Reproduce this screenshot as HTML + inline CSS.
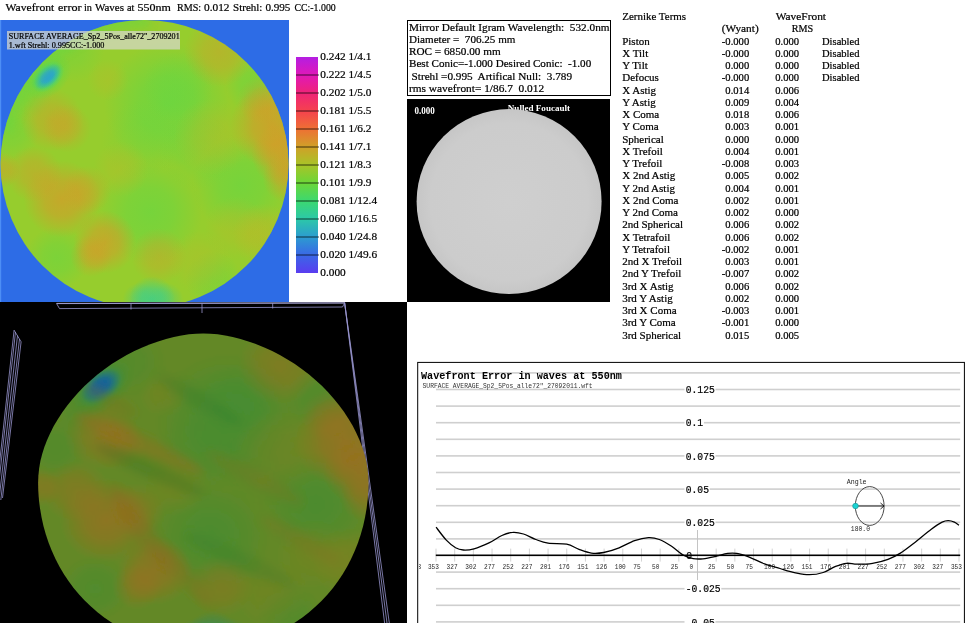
<!DOCTYPE html>
<html><head><meta charset="utf-8"><title>Wavefront report</title>
<style>html,body{margin:0;padding:0;background:#fff}svg{display:block}text{opacity:.999}</style></head><body>
<svg width="972" height="623" viewBox="0 0 972 623">
<defs>
<radialGradient id="g2ca4cc"><stop offset="0" stop-color="#2ca4cc" stop-opacity="1"/><stop offset="0.45" stop-color="#2ca4cc" stop-opacity="0.75"/><stop offset="1" stop-color="#2ca4cc" stop-opacity="0"/></radialGradient>
<radialGradient id="g2fcf9a"><stop offset="0" stop-color="#2fcf9a" stop-opacity="1"/><stop offset="0.45" stop-color="#2fcf9a" stop-opacity="0.75"/><stop offset="1" stop-color="#2fcf9a" stop-opacity="0"/></radialGradient>
<radialGradient id="g62d844"><stop offset="0" stop-color="#62d844" stop-opacity="1"/><stop offset="0.45" stop-color="#62d844" stop-opacity="0.75"/><stop offset="1" stop-color="#62d844" stop-opacity="0"/></radialGradient>
<radialGradient id="gbcb828"><stop offset="0" stop-color="#bcb828" stop-opacity="1"/><stop offset="0.45" stop-color="#bcb828" stop-opacity="0.75"/><stop offset="1" stop-color="#bcb828" stop-opacity="0"/></radialGradient>
<radialGradient id="gde9428"><stop offset="0" stop-color="#de9428" stop-opacity="1"/><stop offset="0.45" stop-color="#de9428" stop-opacity="0.75"/><stop offset="1" stop-color="#de9428" stop-opacity="0"/></radialGradient>
<clipPath id="c2d"><circle cx="144.5" cy="164" r="144"/></clipPath>
<clipPath id="cpanel"><rect x="0" y="20" width="289" height="282"/></clipPath>
<clipPath id="c3dpanel"><rect x="0" y="302" width="407" height="321"/></clipPath>
<clipPath id="cchart"><rect x="419" y="363" width="545" height="260"/></clipPath>
<linearGradient id="cbar" x1="0" y1="0" x2="0" y2="1">
<stop offset="0.0000" stop-color="#b41ee2"/>
<stop offset="0.0833" stop-color="#e018b8"/>
<stop offset="0.1667" stop-color="#ef2478"/>
<stop offset="0.2500" stop-color="#f5424e"/>
<stop offset="0.3333" stop-color="#ee7034"/>
<stop offset="0.4167" stop-color="#d0a028"/>
<stop offset="0.5000" stop-color="#a8c428"/>
<stop offset="0.5833" stop-color="#6cd638"/>
<stop offset="0.6667" stop-color="#3cd870"/>
<stop offset="0.7500" stop-color="#2cc8a8"/>
<stop offset="0.8333" stop-color="#2c9cd0"/>
<stop offset="0.9167" stop-color="#3a68e6"/>
<stop offset="1.0000" stop-color="#5a3cf0"/>
</linearGradient>
<filter id="bl3" x="-10%" y="-10%" width="120%" height="120%"><feGaussianBlur stdDeviation="1.2"/></filter>
<filter id="bl4" x="-30%" y="-80%" width="160%" height="260%"><feGaussianBlur stdDeviation="4"/></filter>
<radialGradient id="fdisc"><stop offset="0" stop-color="#cfcfcf"/><stop offset="0.85" stop-color="#cccccc"/><stop offset="1" stop-color="#c6c6c6"/></radialGradient>
<filter id="bl05"><feGaussianBlur stdDeviation="0.5"/></filter>
</defs>
<rect width="972" height="623" fill="#fff"/>
<g id="title">
<text x="5.6" y="10.6" font-size="11.3" font-family='"Liberation Serif", serif' font-weight="normal" fill="#000" text-anchor="start" xml:space="preserve" stroke="#000" stroke-width="0.22" textLength="48.7" lengthAdjust="spacingAndGlyphs" >Wavefront</text>
<text x="58" y="10.6" font-size="11.3" font-family='"Liberation Serif", serif' font-weight="normal" fill="#000" text-anchor="start" xml:space="preserve" stroke="#000" stroke-width="0.22" textLength="23.5" lengthAdjust="spacingAndGlyphs" >error</text>
<text x="84" y="10.6" font-size="11.3" font-family='"Liberation Serif", serif' font-weight="normal" fill="#000" text-anchor="start" xml:space="preserve" stroke="#000" stroke-width="0.22" textLength="8" lengthAdjust="spacingAndGlyphs" >in</text>
<text x="94.9" y="10.6" font-size="11.3" font-family='"Liberation Serif", serif' font-weight="normal" fill="#000" text-anchor="start" xml:space="preserve" stroke="#000" stroke-width="0.22" textLength="29.1" lengthAdjust="spacingAndGlyphs" >Waves</text>
<text x="127" y="10.6" font-size="11.3" font-family='"Liberation Serif", serif' font-weight="normal" fill="#000" text-anchor="start" xml:space="preserve" stroke="#000" stroke-width="0.22" textLength="7.4" lengthAdjust="spacingAndGlyphs" >at</text>
<text x="137.5" y="10.6" font-size="11.3" font-family='"Liberation Serif", serif' font-weight="normal" fill="#000" text-anchor="start" xml:space="preserve" stroke="#000" stroke-width="0.22" textLength="33.4" lengthAdjust="spacingAndGlyphs" >550nm</text>
<text x="177" y="10.6" font-size="11.3" font-family='"Liberation Serif", serif' font-weight="normal" fill="#000" text-anchor="start" xml:space="preserve" stroke="#000" stroke-width="0.22" textLength="24.1" lengthAdjust="spacingAndGlyphs" >RMS:</text>
<text x="204" y="10.6" font-size="11.3" font-family='"Liberation Serif", serif' font-weight="normal" fill="#000" text-anchor="start" xml:space="preserve" stroke="#000" stroke-width="0.22" textLength="25.5" lengthAdjust="spacingAndGlyphs" >0.012</text>
<text x="233.1" y="10.6" font-size="11.3" font-family='"Liberation Serif", serif' font-weight="normal" fill="#000" text-anchor="start" xml:space="preserve" stroke="#000" stroke-width="0.22" textLength="29.3" lengthAdjust="spacingAndGlyphs" >Strehl:</text>
<text x="265.4" y="10.6" font-size="11.3" font-family='"Liberation Serif", serif' font-weight="normal" fill="#000" text-anchor="start" xml:space="preserve" stroke="#000" stroke-width="0.22" textLength="25.0" lengthAdjust="spacingAndGlyphs" >0.995</text>
<text x="294.5" y="10.6" font-size="11.3" font-family='"Liberation Serif", serif' font-weight="normal" fill="#000" text-anchor="start" xml:space="preserve" stroke="#000" stroke-width="0.22" textLength="41.2" lengthAdjust="spacingAndGlyphs" >CC:-1.000</text>
</g>
<rect x="0" y="20" width="289" height="282" fill="#2d6ce6"/>
<rect x="0" y="20" width="1.2" height="282" fill="#4d8ef5"/>
<g clip-path="url(#cpanel)"><g clip-path="url(#c2d)">
<g id="hm">
<circle cx="144.5" cy="164" r="146" fill="#96cd2d"/>
<circle cx="167" cy="105" r="63.0" fill="url(#g62d844)" opacity="0.68"/>
<circle cx="178" cy="87" r="35.0" fill="url(#g62d844)" opacity="0.36"/>
<circle cx="150" cy="212" r="52.5" fill="url(#g62d844)" opacity="0.61"/>
<circle cx="241" cy="185" r="49.0" fill="url(#g62d844)" opacity="0.61"/>
<circle cx="253" cy="85" r="28.0" fill="url(#g62d844)" opacity="0.50"/>
<circle cx="57" cy="258" r="31.5" fill="url(#g62d844)" opacity="0.50"/>
<circle cx="11" cy="132" r="28.0" fill="url(#g62d844)" opacity="0.43"/>
<circle cx="213" cy="279" r="28.0" fill="url(#g62d844)" opacity="0.43"/>
<circle cx="152" cy="299" r="22.8" fill="url(#g2fcf9a)" opacity="0.65"/>
<circle cx="140" cy="300" r="17.5" fill="url(#g2fcf9a)" opacity="0.36"/>
<circle cx="166" cy="300" r="17.5" fill="url(#g2fcf9a)" opacity="0.36"/>
<circle cx="70" cy="48" r="35.0" fill="url(#g62d844)" opacity="0.36"/>
<circle cx="28" cy="95" r="24.5" fill="url(#g62d844)" opacity="0.36"/>
<circle cx="197" cy="151" r="38.5" fill="url(#g62d844)" opacity="0.29"/>
<circle cx="140" cy="140" r="38.5" fill="url(#g62d844)" opacity="0.25"/>
<circle cx="272" cy="126" r="42.0" fill="url(#gde9428)" opacity="0.72"/>
<circle cx="283" cy="155" r="31.5" fill="url(#gde9428)" opacity="0.61"/>
<circle cx="287" cy="178" r="24.5" fill="url(#gde9428)" opacity="0.50"/>
<circle cx="262" cy="100" r="24.5" fill="url(#gde9428)" opacity="0.36"/>
<circle cx="219" cy="52" r="35.0" fill="url(#gde9428)" opacity="0.40"/>
<circle cx="62" cy="199" r="38.5" fill="url(#gde9428)" opacity="0.65"/>
<circle cx="34" cy="174" r="28.0" fill="url(#gde9428)" opacity="0.43"/>
<circle cx="87" cy="190" r="24.5" fill="url(#gde9428)" opacity="0.36"/>
<circle cx="105" cy="242" r="31.5" fill="url(#gde9428)" opacity="0.61"/>
<circle cx="91" cy="256" r="21.0" fill="url(#gde9428)" opacity="0.43"/>
<circle cx="52" cy="120" r="31.5" fill="url(#gde9428)" opacity="0.43"/>
<circle cx="67" cy="128" r="24.5" fill="url(#gde9428)" opacity="0.36"/>
<circle cx="159" cy="256" r="28.0" fill="url(#gde9428)" opacity="0.36"/>
<circle cx="264" cy="235" r="31.5" fill="url(#gbcb828)" opacity="0.58"/>
<circle cx="236" cy="228" r="31.5" fill="url(#gbcb828)" opacity="0.36"/>
<circle cx="212" cy="137" r="38.5" fill="url(#gbcb828)" opacity="0.40"/>
<circle cx="121" cy="169" r="28.0" fill="url(#gbcb828)" opacity="0.36"/>
<circle cx="108" cy="80" r="21.0" fill="url(#gbcb828)" opacity="0.36"/>
<circle cx="3" cy="170" r="17.5" fill="url(#gde9428)" opacity="0.43"/>
<circle cx="200" cy="262" r="31.5" fill="url(#gbcb828)" opacity="0.36"/>
<ellipse cx="47.5" cy="76.5" rx="27.200000000000003" ry="19.200000000000003" transform="rotate(-42 47.5 76.5)" fill="url(#g62d844)" opacity="0.9"/>
<ellipse cx="47.5" cy="76.5" rx="19.200000000000003" ry="12.8" transform="rotate(-42 47.5 76.5)" fill="url(#g2fcf9a)" opacity="0.9"/>
<ellipse cx="47.5" cy="76.5" rx="16.0" ry="9.600000000000001" transform="rotate(-42 47.5 76.5)" fill="url(#g2ca4cc)" opacity="1.0"/>
<ellipse cx="47.5" cy="76.5" rx="9.600000000000001" ry="5.760000000000001" transform="rotate(-42 47.5 76.5)" fill="url(#g2ca4cc)" opacity="1.0"/>
<path d="M6 130 A144 144 0 0 1 150 21" fill="none" stroke="#62d844" stroke-width="14" opacity="0.45" filter="url(#bl4)"/>
</g>
</g></g>
<rect x="7" y="31" width="173" height="18.5" fill="#d8d8cc" fill-opacity="0.72"/>
<text x="8.7" y="39.1" font-size="8.2" font-family='"Liberation Serif", serif' font-weight="normal" fill="#000" text-anchor="start" xml:space="preserve" stroke="#000" stroke-width="0.22" textLength="171" lengthAdjust="spacingAndGlyphs" >SURFACE AVERAGE_Sp2_5Pos_alle72&quot;_2709201</text>
<text x="8.7" y="48" font-size="8.2" font-family='"Liberation Serif", serif' font-weight="normal" fill="#000" text-anchor="start" xml:space="preserve" stroke="#000" stroke-width="0.22" >1.wft Strehl: 0.995CC:-1.000</text>
<rect x="296" y="57" width="22" height="216" fill="url(#cbar)"/>
<text x="320.3" y="60.1" font-size="11.3" font-family='"Liberation Serif", serif' font-weight="normal" fill="#000" text-anchor="start" xml:space="preserve" stroke="#000" stroke-width="0.22" >0.242 1/4.1</text>
<rect x="296" y="74.5" width="23" height="1" fill="#000" fill-opacity="0.7"/>
<text x="320.3" y="78.1" font-size="11.3" font-family='"Liberation Serif", serif' font-weight="normal" fill="#000" text-anchor="start" xml:space="preserve" stroke="#000" stroke-width="0.22" >0.222 1/4.5</text>
<rect x="296" y="92.5" width="23" height="1" fill="#000" fill-opacity="0.7"/>
<text x="320.3" y="96.1" font-size="11.3" font-family='"Liberation Serif", serif' font-weight="normal" fill="#000" text-anchor="start" xml:space="preserve" stroke="#000" stroke-width="0.22" >0.202 1/5.0</text>
<rect x="296" y="110.5" width="23" height="1" fill="#000" fill-opacity="0.7"/>
<text x="320.3" y="114.1" font-size="11.3" font-family='"Liberation Serif", serif' font-weight="normal" fill="#000" text-anchor="start" xml:space="preserve" stroke="#000" stroke-width="0.22" >0.181 1/5.5</text>
<rect x="296" y="128.5" width="23" height="1" fill="#000" fill-opacity="0.7"/>
<text x="320.3" y="132.1" font-size="11.3" font-family='"Liberation Serif", serif' font-weight="normal" fill="#000" text-anchor="start" xml:space="preserve" stroke="#000" stroke-width="0.22" >0.161 1/6.2</text>
<rect x="296" y="146.5" width="23" height="1" fill="#000" fill-opacity="0.7"/>
<text x="320.3" y="150.1" font-size="11.3" font-family='"Liberation Serif", serif' font-weight="normal" fill="#000" text-anchor="start" xml:space="preserve" stroke="#000" stroke-width="0.22" >0.141 1/7.1</text>
<rect x="296" y="164.5" width="23" height="1" fill="#000" fill-opacity="0.7"/>
<text x="320.3" y="168.1" font-size="11.3" font-family='"Liberation Serif", serif' font-weight="normal" fill="#000" text-anchor="start" xml:space="preserve" stroke="#000" stroke-width="0.22" >0.121 1/8.3</text>
<rect x="296" y="182.5" width="23" height="1" fill="#000" fill-opacity="0.7"/>
<text x="320.3" y="186.1" font-size="11.3" font-family='"Liberation Serif", serif' font-weight="normal" fill="#000" text-anchor="start" xml:space="preserve" stroke="#000" stroke-width="0.22" >0.101 1/9.9</text>
<rect x="296" y="200.5" width="23" height="1" fill="#000" fill-opacity="0.7"/>
<text x="320.3" y="204.1" font-size="11.3" font-family='"Liberation Serif", serif' font-weight="normal" fill="#000" text-anchor="start" xml:space="preserve" stroke="#000" stroke-width="0.22" >0.081 1/12.4</text>
<rect x="296" y="218.5" width="23" height="1" fill="#000" fill-opacity="0.7"/>
<text x="320.3" y="222.1" font-size="11.3" font-family='"Liberation Serif", serif' font-weight="normal" fill="#000" text-anchor="start" xml:space="preserve" stroke="#000" stroke-width="0.22" >0.060 1/16.5</text>
<rect x="296" y="236.5" width="23" height="1" fill="#000" fill-opacity="0.7"/>
<text x="320.3" y="240.1" font-size="11.3" font-family='"Liberation Serif", serif' font-weight="normal" fill="#000" text-anchor="start" xml:space="preserve" stroke="#000" stroke-width="0.22" >0.040 1/24.8</text>
<rect x="296" y="254.5" width="23" height="1" fill="#000" fill-opacity="0.7"/>
<text x="320.3" y="258.1" font-size="11.3" font-family='"Liberation Serif", serif' font-weight="normal" fill="#000" text-anchor="start" xml:space="preserve" stroke="#000" stroke-width="0.22" >0.020 1/49.6</text>
<text x="320.3" y="276.1" font-size="11.3" font-family='"Liberation Serif", serif' font-weight="normal" fill="#000" text-anchor="start" xml:space="preserve" stroke="#000" stroke-width="0.22" >0.000</text>
<rect x="407.5" y="20.5" width="203" height="75" fill="#fff" stroke="#000" stroke-width="1"/>
<text x="409" y="30.8" font-size="11.2" font-family='"Liberation Serif", serif' font-weight="normal" fill="#000" text-anchor="start" xml:space="preserve" stroke="#000" stroke-width="0.22" textLength="200.5" lengthAdjust="spacingAndGlyphs" >Mirror Default Igram Wavelength:  532.0nm</text>
<text x="409" y="43.0" font-size="11.2" font-family='"Liberation Serif", serif' font-weight="normal" fill="#000" text-anchor="start" xml:space="preserve" stroke="#000" stroke-width="0.22" textLength="106.4" lengthAdjust="spacingAndGlyphs" >Diameter =  706.25 mm</text>
<text x="409" y="55.2" font-size="11.2" font-family='"Liberation Serif", serif' font-weight="normal" fill="#000" text-anchor="start" xml:space="preserve" stroke="#000" stroke-width="0.22" textLength="91.7" lengthAdjust="spacingAndGlyphs" >ROC = 6850.00 mm</text>
<text x="409" y="67.39999999999999" font-size="11.2" font-family='"Liberation Serif", serif' font-weight="normal" fill="#000" text-anchor="start" xml:space="preserve" stroke="#000" stroke-width="0.22" textLength="182.2" lengthAdjust="spacingAndGlyphs" >Best Conic=-1.000 Desired Conic:  -1.00</text>
<text x="411.6" y="79.6" font-size="11.2" font-family='"Liberation Serif", serif' font-weight="normal" fill="#000" text-anchor="start" xml:space="preserve" stroke="#000" stroke-width="0.22" textLength="160.4" lengthAdjust="spacingAndGlyphs" >Strehl =0.995  Artifical Null:  3.789</text>
<text x="409" y="91.8" font-size="11.2" font-family='"Liberation Serif", serif' font-weight="normal" fill="#000" text-anchor="start" xml:space="preserve" stroke="#000" stroke-width="0.22" textLength="135.1" lengthAdjust="spacingAndGlyphs" >rms wavefront= 1/86.7  0.012</text>
<rect x="407" y="99" width="203" height="203" fill="#000"/>
<text x="414.4" y="113.6" font-size="9.3" font-family='"Liberation Serif", serif' font-weight="bold" fill="#fff" text-anchor="start" xml:space="preserve" textLength="20.3" lengthAdjust="spacingAndGlyphs" >0.000</text>
<text x="507.8" y="110.9" font-size="9" font-family='"Liberation Serif", serif' font-weight="bold" fill="#fff" text-anchor="start" xml:space="preserve" textLength="62.3" lengthAdjust="spacingAndGlyphs" >Nulled Foucault</text>
<circle cx="509.1" cy="201.6" r="92.5" fill="url(#fdisc)" filter="url(#bl05)"/>
<text x="622.2" y="19.7" font-size="11" font-family='"Liberation Serif", serif' font-weight="normal" fill="#000" text-anchor="start" xml:space="preserve" stroke="#000" stroke-width="0.22" textLength="63.9" lengthAdjust="spacingAndGlyphs" >Zernike Terms</text>
<text x="775.7" y="19.7" font-size="11" font-family='"Liberation Serif", serif' font-weight="normal" fill="#000" text-anchor="start" xml:space="preserve" stroke="#000" stroke-width="0.22" textLength="50.3" lengthAdjust="spacingAndGlyphs" >WaveFront</text>
<text x="721.7" y="32.2" font-size="11" font-family='"Liberation Serif", serif' font-weight="normal" fill="#000" text-anchor="start" xml:space="preserve" stroke="#000" stroke-width="0.22" textLength="37" lengthAdjust="spacingAndGlyphs" >(Wyant)</text>
<text x="791.8" y="32.2" font-size="11" font-family='"Liberation Serif", serif' font-weight="normal" fill="#000" text-anchor="start" xml:space="preserve" stroke="#000" stroke-width="0.22" textLength="21.4" lengthAdjust="spacingAndGlyphs" >RMS</text>
<text x="622.2" y="44.60" font-size="11" font-family='"Liberation Serif", serif' font-weight="normal" fill="#000" text-anchor="start" xml:space="preserve" stroke="#000" stroke-width="0.22" >Piston</text>
<text x="749.2" y="44.60" font-size="10.6" font-family='"Liberation Serif", serif' font-weight="normal" fill="#000" text-anchor="end" xml:space="preserve" stroke="#000" stroke-width="0.22" >-0.000</text>
<text x="775.2" y="44.60" font-size="10.6" font-family='"Liberation Serif", serif' font-weight="normal" fill="#000" text-anchor="start" xml:space="preserve" stroke="#000" stroke-width="0.22" >0.000</text>
<text x="822" y="44.60" font-size="10.6" font-family='"Liberation Serif", serif' font-weight="normal" fill="#000" text-anchor="start" xml:space="preserve" stroke="#000" stroke-width="0.22" textLength="37.5" lengthAdjust="spacingAndGlyphs" >Disabled</text>
<text x="622.2" y="56.85" font-size="11" font-family='"Liberation Serif", serif' font-weight="normal" fill="#000" text-anchor="start" xml:space="preserve" stroke="#000" stroke-width="0.22" >X Tilt</text>
<text x="749.2" y="56.85" font-size="10.6" font-family='"Liberation Serif", serif' font-weight="normal" fill="#000" text-anchor="end" xml:space="preserve" stroke="#000" stroke-width="0.22" >-0.000</text>
<text x="775.2" y="56.85" font-size="10.6" font-family='"Liberation Serif", serif' font-weight="normal" fill="#000" text-anchor="start" xml:space="preserve" stroke="#000" stroke-width="0.22" >0.000</text>
<text x="822" y="56.85" font-size="10.6" font-family='"Liberation Serif", serif' font-weight="normal" fill="#000" text-anchor="start" xml:space="preserve" stroke="#000" stroke-width="0.22" textLength="37.5" lengthAdjust="spacingAndGlyphs" >Disabled</text>
<text x="622.2" y="69.10" font-size="11" font-family='"Liberation Serif", serif' font-weight="normal" fill="#000" text-anchor="start" xml:space="preserve" stroke="#000" stroke-width="0.22" >Y Tilt</text>
<text x="749.2" y="69.10" font-size="10.6" font-family='"Liberation Serif", serif' font-weight="normal" fill="#000" text-anchor="end" xml:space="preserve" stroke="#000" stroke-width="0.22" >0.000</text>
<text x="775.2" y="69.10" font-size="10.6" font-family='"Liberation Serif", serif' font-weight="normal" fill="#000" text-anchor="start" xml:space="preserve" stroke="#000" stroke-width="0.22" >0.000</text>
<text x="822" y="69.10" font-size="10.6" font-family='"Liberation Serif", serif' font-weight="normal" fill="#000" text-anchor="start" xml:space="preserve" stroke="#000" stroke-width="0.22" textLength="37.5" lengthAdjust="spacingAndGlyphs" >Disabled</text>
<text x="622.2" y="81.35" font-size="11" font-family='"Liberation Serif", serif' font-weight="normal" fill="#000" text-anchor="start" xml:space="preserve" stroke="#000" stroke-width="0.22" >Defocus</text>
<text x="749.2" y="81.35" font-size="10.6" font-family='"Liberation Serif", serif' font-weight="normal" fill="#000" text-anchor="end" xml:space="preserve" stroke="#000" stroke-width="0.22" >-0.000</text>
<text x="775.2" y="81.35" font-size="10.6" font-family='"Liberation Serif", serif' font-weight="normal" fill="#000" text-anchor="start" xml:space="preserve" stroke="#000" stroke-width="0.22" >0.000</text>
<text x="822" y="81.35" font-size="10.6" font-family='"Liberation Serif", serif' font-weight="normal" fill="#000" text-anchor="start" xml:space="preserve" stroke="#000" stroke-width="0.22" textLength="37.5" lengthAdjust="spacingAndGlyphs" >Disabled</text>
<text x="622.2" y="93.60" font-size="11" font-family='"Liberation Serif", serif' font-weight="normal" fill="#000" text-anchor="start" xml:space="preserve" stroke="#000" stroke-width="0.22" >X Astig</text>
<text x="749.2" y="93.60" font-size="10.6" font-family='"Liberation Serif", serif' font-weight="normal" fill="#000" text-anchor="end" xml:space="preserve" stroke="#000" stroke-width="0.22" >0.014</text>
<text x="775.2" y="93.60" font-size="10.6" font-family='"Liberation Serif", serif' font-weight="normal" fill="#000" text-anchor="start" xml:space="preserve" stroke="#000" stroke-width="0.22" >0.006</text>
<text x="622.2" y="105.85" font-size="11" font-family='"Liberation Serif", serif' font-weight="normal" fill="#000" text-anchor="start" xml:space="preserve" stroke="#000" stroke-width="0.22" >Y Astig</text>
<text x="749.2" y="105.85" font-size="10.6" font-family='"Liberation Serif", serif' font-weight="normal" fill="#000" text-anchor="end" xml:space="preserve" stroke="#000" stroke-width="0.22" >0.009</text>
<text x="775.2" y="105.85" font-size="10.6" font-family='"Liberation Serif", serif' font-weight="normal" fill="#000" text-anchor="start" xml:space="preserve" stroke="#000" stroke-width="0.22" >0.004</text>
<text x="622.2" y="118.10" font-size="11" font-family='"Liberation Serif", serif' font-weight="normal" fill="#000" text-anchor="start" xml:space="preserve" stroke="#000" stroke-width="0.22" >X Coma</text>
<text x="749.2" y="118.10" font-size="10.6" font-family='"Liberation Serif", serif' font-weight="normal" fill="#000" text-anchor="end" xml:space="preserve" stroke="#000" stroke-width="0.22" >0.018</text>
<text x="775.2" y="118.10" font-size="10.6" font-family='"Liberation Serif", serif' font-weight="normal" fill="#000" text-anchor="start" xml:space="preserve" stroke="#000" stroke-width="0.22" >0.006</text>
<text x="622.2" y="130.35" font-size="11" font-family='"Liberation Serif", serif' font-weight="normal" fill="#000" text-anchor="start" xml:space="preserve" stroke="#000" stroke-width="0.22" >Y Coma</text>
<text x="749.2" y="130.35" font-size="10.6" font-family='"Liberation Serif", serif' font-weight="normal" fill="#000" text-anchor="end" xml:space="preserve" stroke="#000" stroke-width="0.22" >0.003</text>
<text x="775.2" y="130.35" font-size="10.6" font-family='"Liberation Serif", serif' font-weight="normal" fill="#000" text-anchor="start" xml:space="preserve" stroke="#000" stroke-width="0.22" >0.001</text>
<text x="622.2" y="142.60" font-size="11" font-family='"Liberation Serif", serif' font-weight="normal" fill="#000" text-anchor="start" xml:space="preserve" stroke="#000" stroke-width="0.22" >Spherical</text>
<text x="749.2" y="142.60" font-size="10.6" font-family='"Liberation Serif", serif' font-weight="normal" fill="#000" text-anchor="end" xml:space="preserve" stroke="#000" stroke-width="0.22" >0.000</text>
<text x="775.2" y="142.60" font-size="10.6" font-family='"Liberation Serif", serif' font-weight="normal" fill="#000" text-anchor="start" xml:space="preserve" stroke="#000" stroke-width="0.22" >0.000</text>
<text x="622.2" y="154.85" font-size="11" font-family='"Liberation Serif", serif' font-weight="normal" fill="#000" text-anchor="start" xml:space="preserve" stroke="#000" stroke-width="0.22" >X Trefoil</text>
<text x="749.2" y="154.85" font-size="10.6" font-family='"Liberation Serif", serif' font-weight="normal" fill="#000" text-anchor="end" xml:space="preserve" stroke="#000" stroke-width="0.22" >0.004</text>
<text x="775.2" y="154.85" font-size="10.6" font-family='"Liberation Serif", serif' font-weight="normal" fill="#000" text-anchor="start" xml:space="preserve" stroke="#000" stroke-width="0.22" >0.001</text>
<text x="622.2" y="167.10" font-size="11" font-family='"Liberation Serif", serif' font-weight="normal" fill="#000" text-anchor="start" xml:space="preserve" stroke="#000" stroke-width="0.22" >Y Trefoil</text>
<text x="749.2" y="167.10" font-size="10.6" font-family='"Liberation Serif", serif' font-weight="normal" fill="#000" text-anchor="end" xml:space="preserve" stroke="#000" stroke-width="0.22" >-0.008</text>
<text x="775.2" y="167.10" font-size="10.6" font-family='"Liberation Serif", serif' font-weight="normal" fill="#000" text-anchor="start" xml:space="preserve" stroke="#000" stroke-width="0.22" >0.003</text>
<text x="622.2" y="179.35" font-size="11" font-family='"Liberation Serif", serif' font-weight="normal" fill="#000" text-anchor="start" xml:space="preserve" stroke="#000" stroke-width="0.22" >X 2nd Astig</text>
<text x="749.2" y="179.35" font-size="10.6" font-family='"Liberation Serif", serif' font-weight="normal" fill="#000" text-anchor="end" xml:space="preserve" stroke="#000" stroke-width="0.22" >0.005</text>
<text x="775.2" y="179.35" font-size="10.6" font-family='"Liberation Serif", serif' font-weight="normal" fill="#000" text-anchor="start" xml:space="preserve" stroke="#000" stroke-width="0.22" >0.002</text>
<text x="622.2" y="191.60" font-size="11" font-family='"Liberation Serif", serif' font-weight="normal" fill="#000" text-anchor="start" xml:space="preserve" stroke="#000" stroke-width="0.22" >Y 2nd Astig</text>
<text x="749.2" y="191.60" font-size="10.6" font-family='"Liberation Serif", serif' font-weight="normal" fill="#000" text-anchor="end" xml:space="preserve" stroke="#000" stroke-width="0.22" >0.004</text>
<text x="775.2" y="191.60" font-size="10.6" font-family='"Liberation Serif", serif' font-weight="normal" fill="#000" text-anchor="start" xml:space="preserve" stroke="#000" stroke-width="0.22" >0.001</text>
<text x="622.2" y="203.85" font-size="11" font-family='"Liberation Serif", serif' font-weight="normal" fill="#000" text-anchor="start" xml:space="preserve" stroke="#000" stroke-width="0.22" >X 2nd Coma</text>
<text x="749.2" y="203.85" font-size="10.6" font-family='"Liberation Serif", serif' font-weight="normal" fill="#000" text-anchor="end" xml:space="preserve" stroke="#000" stroke-width="0.22" >0.002</text>
<text x="775.2" y="203.85" font-size="10.6" font-family='"Liberation Serif", serif' font-weight="normal" fill="#000" text-anchor="start" xml:space="preserve" stroke="#000" stroke-width="0.22" >0.001</text>
<text x="622.2" y="216.10" font-size="11" font-family='"Liberation Serif", serif' font-weight="normal" fill="#000" text-anchor="start" xml:space="preserve" stroke="#000" stroke-width="0.22" >Y 2nd Coma</text>
<text x="749.2" y="216.10" font-size="10.6" font-family='"Liberation Serif", serif' font-weight="normal" fill="#000" text-anchor="end" xml:space="preserve" stroke="#000" stroke-width="0.22" >0.002</text>
<text x="775.2" y="216.10" font-size="10.6" font-family='"Liberation Serif", serif' font-weight="normal" fill="#000" text-anchor="start" xml:space="preserve" stroke="#000" stroke-width="0.22" >0.000</text>
<text x="622.2" y="228.35" font-size="11" font-family='"Liberation Serif", serif' font-weight="normal" fill="#000" text-anchor="start" xml:space="preserve" stroke="#000" stroke-width="0.22" >2nd Spherical</text>
<text x="749.2" y="228.35" font-size="10.6" font-family='"Liberation Serif", serif' font-weight="normal" fill="#000" text-anchor="end" xml:space="preserve" stroke="#000" stroke-width="0.22" >0.006</text>
<text x="775.2" y="228.35" font-size="10.6" font-family='"Liberation Serif", serif' font-weight="normal" fill="#000" text-anchor="start" xml:space="preserve" stroke="#000" stroke-width="0.22" >0.002</text>
<text x="622.2" y="240.60" font-size="11" font-family='"Liberation Serif", serif' font-weight="normal" fill="#000" text-anchor="start" xml:space="preserve" stroke="#000" stroke-width="0.22" >X Tetrafoil</text>
<text x="749.2" y="240.60" font-size="10.6" font-family='"Liberation Serif", serif' font-weight="normal" fill="#000" text-anchor="end" xml:space="preserve" stroke="#000" stroke-width="0.22" >0.006</text>
<text x="775.2" y="240.60" font-size="10.6" font-family='"Liberation Serif", serif' font-weight="normal" fill="#000" text-anchor="start" xml:space="preserve" stroke="#000" stroke-width="0.22" >0.002</text>
<text x="622.2" y="252.85" font-size="11" font-family='"Liberation Serif", serif' font-weight="normal" fill="#000" text-anchor="start" xml:space="preserve" stroke="#000" stroke-width="0.22" >Y Tetrafoil</text>
<text x="749.2" y="252.85" font-size="10.6" font-family='"Liberation Serif", serif' font-weight="normal" fill="#000" text-anchor="end" xml:space="preserve" stroke="#000" stroke-width="0.22" >-0.002</text>
<text x="775.2" y="252.85" font-size="10.6" font-family='"Liberation Serif", serif' font-weight="normal" fill="#000" text-anchor="start" xml:space="preserve" stroke="#000" stroke-width="0.22" >0.001</text>
<text x="622.2" y="265.10" font-size="11" font-family='"Liberation Serif", serif' font-weight="normal" fill="#000" text-anchor="start" xml:space="preserve" stroke="#000" stroke-width="0.22" >2nd X Trefoil</text>
<text x="749.2" y="265.10" font-size="10.6" font-family='"Liberation Serif", serif' font-weight="normal" fill="#000" text-anchor="end" xml:space="preserve" stroke="#000" stroke-width="0.22" >0.003</text>
<text x="775.2" y="265.10" font-size="10.6" font-family='"Liberation Serif", serif' font-weight="normal" fill="#000" text-anchor="start" xml:space="preserve" stroke="#000" stroke-width="0.22" >0.001</text>
<text x="622.2" y="277.35" font-size="11" font-family='"Liberation Serif", serif' font-weight="normal" fill="#000" text-anchor="start" xml:space="preserve" stroke="#000" stroke-width="0.22" >2nd Y Trefoil</text>
<text x="749.2" y="277.35" font-size="10.6" font-family='"Liberation Serif", serif' font-weight="normal" fill="#000" text-anchor="end" xml:space="preserve" stroke="#000" stroke-width="0.22" >-0.007</text>
<text x="775.2" y="277.35" font-size="10.6" font-family='"Liberation Serif", serif' font-weight="normal" fill="#000" text-anchor="start" xml:space="preserve" stroke="#000" stroke-width="0.22" >0.002</text>
<text x="622.2" y="289.60" font-size="11" font-family='"Liberation Serif", serif' font-weight="normal" fill="#000" text-anchor="start" xml:space="preserve" stroke="#000" stroke-width="0.22" >3rd X Astig</text>
<text x="749.2" y="289.60" font-size="10.6" font-family='"Liberation Serif", serif' font-weight="normal" fill="#000" text-anchor="end" xml:space="preserve" stroke="#000" stroke-width="0.22" >0.006</text>
<text x="775.2" y="289.60" font-size="10.6" font-family='"Liberation Serif", serif' font-weight="normal" fill="#000" text-anchor="start" xml:space="preserve" stroke="#000" stroke-width="0.22" >0.002</text>
<text x="622.2" y="301.85" font-size="11" font-family='"Liberation Serif", serif' font-weight="normal" fill="#000" text-anchor="start" xml:space="preserve" stroke="#000" stroke-width="0.22" >3rd Y Astig</text>
<text x="749.2" y="301.85" font-size="10.6" font-family='"Liberation Serif", serif' font-weight="normal" fill="#000" text-anchor="end" xml:space="preserve" stroke="#000" stroke-width="0.22" >0.002</text>
<text x="775.2" y="301.85" font-size="10.6" font-family='"Liberation Serif", serif' font-weight="normal" fill="#000" text-anchor="start" xml:space="preserve" stroke="#000" stroke-width="0.22" >0.000</text>
<text x="622.2" y="314.10" font-size="11" font-family='"Liberation Serif", serif' font-weight="normal" fill="#000" text-anchor="start" xml:space="preserve" stroke="#000" stroke-width="0.22" >3rd X Coma</text>
<text x="749.2" y="314.10" font-size="10.6" font-family='"Liberation Serif", serif' font-weight="normal" fill="#000" text-anchor="end" xml:space="preserve" stroke="#000" stroke-width="0.22" >-0.003</text>
<text x="775.2" y="314.10" font-size="10.6" font-family='"Liberation Serif", serif' font-weight="normal" fill="#000" text-anchor="start" xml:space="preserve" stroke="#000" stroke-width="0.22" >0.001</text>
<text x="622.2" y="326.35" font-size="11" font-family='"Liberation Serif", serif' font-weight="normal" fill="#000" text-anchor="start" xml:space="preserve" stroke="#000" stroke-width="0.22" >3rd Y Coma</text>
<text x="749.2" y="326.35" font-size="10.6" font-family='"Liberation Serif", serif' font-weight="normal" fill="#000" text-anchor="end" xml:space="preserve" stroke="#000" stroke-width="0.22" >-0.001</text>
<text x="775.2" y="326.35" font-size="10.6" font-family='"Liberation Serif", serif' font-weight="normal" fill="#000" text-anchor="start" xml:space="preserve" stroke="#000" stroke-width="0.22" >0.000</text>
<text x="622.2" y="338.60" font-size="11" font-family='"Liberation Serif", serif' font-weight="normal" fill="#000" text-anchor="start" xml:space="preserve" stroke="#000" stroke-width="0.22" >3rd Spherical</text>
<text x="749.2" y="338.60" font-size="10.6" font-family='"Liberation Serif", serif' font-weight="normal" fill="#000" text-anchor="end" xml:space="preserve" stroke="#000" stroke-width="0.22" >0.015</text>
<text x="775.2" y="338.60" font-size="10.6" font-family='"Liberation Serif", serif' font-weight="normal" fill="#000" text-anchor="start" xml:space="preserve" stroke="#000" stroke-width="0.22" >0.005</text>
<rect x="0" y="302" width="407" height="321" fill="#000"/>
<g clip-path="url(#c3dpanel)">
<g stroke="#b4b0f4" stroke-width="0.8" fill="none" opacity="0.85">
<path d="M56.6 303.4 L344.6 302.9" stroke="#dcd8f6" stroke-width="1" opacity="1"/>
<path d="M56.6 303.6 L344.6 303 M59.5 308.6 L342.5 307 M56.6 303.6 L59.5 308.6 M342.5 307 L344.6 303 M131 304 V309.5 M202 303.5 V313 M272.7 303 V308.5"/>
<path d="M344.6 302.6 L387 623 M344.6 302.6 L389.3 623 M344.6 302.6 L384.6 623"/>
<path d="M14.1 330.2 L-4.5 500 M15.5 332 L-3 500 M17.5 335.5 L-1 500 M19.5 339 L0.8 500 M21.1 341.8 L2.5 498 M14.1 330.2 L21.1 341.8"/>
</g>
<clipPath id="c3d"><path d="M368.5 483.1 L368.3 491.1 L367.7 499.6 L366.6 508.3 L365.1 517.1 L363.2 525.8 L360.8 534.3 L358.0 542.7 L354.8 550.8 L351.2 558.8 L347.2 566.4 L342.8 573.9 L338.1 581.0 L333.0 587.9 L327.5 594.4 L321.7 600.7 L315.6 606.6 L309.1 612.2 L302.4 617.4 L295.4 622.2 L288.1 626.7 L280.6 630.8 L272.8 634.4 L264.8 637.7 L256.6 640.5 L248.2 642.9 L239.6 644.9 L230.7 646.5 L221.7 647.6 L212.6 648.2 L203.3 648.5 L194.0 648.2 L184.9 647.6 L175.9 646.5 L167.0 644.9 L158.4 642.9 L150.0 640.5 L141.8 637.7 L133.8 634.4 L126.0 630.8 L118.5 626.7 L111.2 622.2 L104.2 617.4 L97.5 612.2 L91.0 606.6 L84.9 600.7 L79.1 594.4 L73.6 587.9 L68.5 581.0 L63.8 573.9 L59.4 566.4 L55.4 558.8 L51.8 550.8 L48.6 542.7 L45.8 534.3 L43.4 525.8 L41.5 517.1 L40.0 508.3 L38.9 499.6 L38.3 491.1 L38.1 483.1 L38.4 475.4 L39.2 468.1 L40.4 461.0 L42.2 454.0 L44.4 447.0 L47.1 439.9 L50.3 432.9 L53.9 425.8 L58.0 418.9 L62.5 412.0 L67.5 405.2 L72.8 398.7 L78.5 392.3 L84.5 386.1 L90.9 380.2 L97.5 374.6 L104.5 369.2 L111.7 364.1 L119.1 359.4 L126.7 355.1 L134.4 351.1 L142.3 347.4 L150.2 344.2 L158.2 341.4 L166.1 339.0 L173.9 337.0 L181.5 335.4 L188.9 334.3 L196.2 333.7 L203.3 333.4 L210.4 333.7 L217.7 334.3 L225.1 335.4 L232.7 337.0 L240.5 339.0 L248.4 341.4 L256.4 344.2 L264.3 347.4 L272.2 351.1 L279.9 355.1 L287.5 359.4 L294.9 364.1 L302.1 369.2 L309.1 374.6 L315.7 380.2 L322.1 386.1 L328.1 392.3 L333.8 398.7 L339.1 405.2 L344.1 412.0 L348.6 418.9 L352.7 425.8 L356.3 432.9 L359.5 439.9 L362.2 447.0 L364.4 454.0 L366.2 461.0 L367.4 468.1 L368.2 475.4Z"/></clipPath>
<g clip-path="url(#c3d)"><g filter="url(#bl3)">
<rect x="20" y="320" width="370" height="310" fill="#648826"/>
<radialGradient id="d62d844"><stop offset="0" stop-color="#3f8e34" stop-opacity="1"/><stop offset="0.45" stop-color="#3f8e34" stop-opacity="0.75"/><stop offset="1" stop-color="#3f8e34" stop-opacity="0"/></radialGradient>
<radialGradient id="d2fcf9a"><stop offset="0" stop-color="#2a8a66" stop-opacity="1"/><stop offset="0.45" stop-color="#2a8a66" stop-opacity="0.75"/><stop offset="1" stop-color="#2a8a66" stop-opacity="0"/></radialGradient>
<radialGradient id="dde9428"><stop offset="0" stop-color="#a06c1e" stop-opacity="1"/><stop offset="0.45" stop-color="#a06c1e" stop-opacity="0.75"/><stop offset="1" stop-color="#a06c1e" stop-opacity="0"/></radialGradient>
<radialGradient id="dbcb828"><stop offset="0" stop-color="#80801f" stop-opacity="1"/><stop offset="0.45" stop-color="#80801f" stop-opacity="0.75"/><stop offset="1" stop-color="#80801f" stop-opacity="0"/></radialGradient>
<radialGradient id="d2ca4cc"><stop offset="0" stop-color="#17639a" stop-opacity="1"/><stop offset="0.45" stop-color="#17639a" stop-opacity="0.75"/><stop offset="1" stop-color="#17639a" stop-opacity="0"/></radialGradient>
<ellipse cx="227.6" cy="420.0" rx="75.2" ry="68.7" fill="url(#d62d844)" opacity="0.71"/>
<ellipse cx="238.9" cy="401.7" rx="41.8" ry="38.2" fill="url(#d62d844)" opacity="0.38"/>
<ellipse cx="209.9" cy="535.3" rx="62.6" ry="57.2" fill="url(#d62d844)" opacity="0.64"/>
<ellipse cx="315.6" cy="504.2" rx="58.5" ry="53.4" fill="url(#d62d844)" opacity="0.64"/>
<ellipse cx="318.4" cy="399.6" rx="33.4" ry="30.5" fill="url(#d62d844)" opacity="0.52"/>
<ellipse cx="94.9" cy="588.4" rx="37.6" ry="34.3" fill="url(#d62d844)" opacity="0.52"/>
<ellipse cx="55.2" cy="447.4" rx="33.4" ry="30.5" fill="url(#d62d844)" opacity="0.45"/>
<ellipse cx="289.7" cy="612.6" rx="33.4" ry="30.5" fill="url(#d62d844)" opacity="0.45"/>
<ellipse cx="212.9" cy="635.6" rx="27.1" ry="24.8" fill="url(#d2fcf9a)" opacity="0.68"/>
<ellipse cx="197.5" cy="636.8" rx="20.9" ry="19.1" fill="url(#d2fcf9a)" opacity="0.38"/>
<ellipse cx="230.9" cy="636.8" rx="20.9" ry="19.1" fill="url(#d2fcf9a)" opacity="0.38"/>
<ellipse cx="127.1" cy="362.0" rx="41.8" ry="38.2" fill="url(#d62d844)" opacity="0.38"/>
<ellipse cx="78.5" cy="409.8" rx="29.2" ry="26.7" fill="url(#d62d844)" opacity="0.38"/>
<ellipse cx="262.6" cy="466.8" rx="45.9" ry="42.0" fill="url(#d62d844)" opacity="0.30"/>
<ellipse cx="198.3" cy="455.6" rx="45.9" ry="42.0" fill="url(#d62d844)" opacity="0.26"/>
<ellipse cx="344.0" cy="441.3" rx="50.1" ry="45.8" fill="url(#dde9428)" opacity="0.75"/>
<ellipse cx="360.2" cy="470.8" rx="37.6" ry="34.3" fill="url(#dde9428)" opacity="0.64"/>
<ellipse cx="368.1" cy="496.1" rx="29.2" ry="26.7" fill="url(#dde9428)" opacity="0.52"/>
<ellipse cx="329.8" cy="414.9" rx="29.2" ry="26.7" fill="url(#dde9428)" opacity="0.38"/>
<ellipse cx="279.8" cy="366.1" rx="41.8" ry="38.2" fill="url(#dde9428)" opacity="0.41"/>
<ellipse cx="106.1" cy="520.3" rx="45.9" ry="42.0" fill="url(#dde9428)" opacity="0.68"/>
<ellipse cx="75.9" cy="491.5" rx="33.4" ry="30.5" fill="url(#dde9428)" opacity="0.45"/>
<ellipse cx="136.1" cy="510.0" rx="29.2" ry="26.7" fill="url(#dde9428)" opacity="0.38"/>
<ellipse cx="155.0" cy="569.9" rx="37.6" ry="34.3" fill="url(#dde9428)" opacity="0.64"/>
<ellipse cx="137.1" cy="586.1" rx="25.1" ry="22.9" fill="url(#dde9428)" opacity="0.45"/>
<ellipse cx="101.8" cy="435.2" rx="37.6" ry="34.3" fill="url(#dde9428)" opacity="0.45"/>
<ellipse cx="117.6" cy="443.4" rx="29.2" ry="26.7" fill="url(#dde9428)" opacity="0.38"/>
<ellipse cx="221.2" cy="586.1" rx="33.4" ry="30.5" fill="url(#dde9428)" opacity="0.38"/>
<ellipse cx="348.6" cy="561.8" rx="37.6" ry="34.3" fill="url(#dbcb828)" opacity="0.60"/>
<ellipse cx="313.9" cy="553.8" rx="37.6" ry="34.3" fill="url(#dbcb828)" opacity="0.38"/>
<ellipse cx="278.5" cy="452.5" rx="45.9" ry="42.0" fill="url(#dbcb828)" opacity="0.41"/>
<ellipse cx="176.3" cy="485.8" rx="33.4" ry="30.5" fill="url(#dbcb828)" opacity="0.38"/>
<ellipse cx="164.8" cy="394.5" rx="25.1" ry="22.9" fill="url(#dbcb828)" opacity="0.38"/>
<ellipse cx="40.8" cy="486.9" rx="20.9" ry="19.1" fill="url(#dde9428)" opacity="0.45"/>
<ellipse cx="272.3" cy="593.0" rx="37.6" ry="34.3" fill="url(#dbcb828)" opacity="0.38"/>
<ellipse cx="101" cy="386" rx="38.400000000000006" ry="24.0" transform="rotate(-36 101 386)" fill="url(#d62d844)" opacity="0.9"/>
<ellipse cx="101" cy="386" rx="27.200000000000003" ry="16.8" transform="rotate(-36 101 386)" fill="url(#d2fcf9a)" opacity="0.9"/>
<ellipse cx="101" cy="386" rx="22.400000000000002" ry="13.600000000000001" transform="rotate(-36 101 386)" fill="url(#d2ca4cc)" opacity="1.0"/>
<ellipse cx="101" cy="386" rx="12.8" ry="8.0" transform="rotate(-36 101 386)" fill="url(#d2ca4cc)" opacity="1.0"/>
<ellipse cx="140" cy="444" rx="70" ry="9" transform="rotate(24 140 444)" fill="#9a6a1c" opacity="0.39" filter="url(#bl4)"/>
<ellipse cx="150" cy="470" rx="60" ry="8" transform="rotate(24 150 470)" fill="#2f6f22" opacity="0.28" filter="url(#bl4)"/>
<ellipse cx="140" cy="528" rx="50" ry="10" transform="rotate(55 140 528)" fill="#8e661c" opacity="0.35" filter="url(#bl4)"/>
<ellipse cx="255" cy="478" rx="55" ry="9" transform="rotate(28 255 478)" fill="#7a741e" opacity="0.32" filter="url(#bl4)"/>
<ellipse cx="200" cy="400" rx="50" ry="8" transform="rotate(30 200 400)" fill="#2f7a2a" opacity="0.28" filter="url(#bl4)"/>
<ellipse cx="240" cy="560" rx="60" ry="9" transform="rotate(25 240 560)" fill="#2f7a2a" opacity="0.24" filter="url(#bl4)"/>
<ellipse cx="300" cy="540" rx="45" ry="8" transform="rotate(30 300 540)" fill="#86701e" opacity="0.28" filter="url(#bl4)"/>
<ellipse cx="110" cy="400" rx="30" ry="7" transform="rotate(30 110 400)" fill="#80701c" opacity="0.32" filter="url(#bl4)"/>
<ellipse cx="185" cy="575" rx="40" ry="8" transform="rotate(50 185 575)" fill="#8a6a1c" opacity="0.28" filter="url(#bl4)"/>
</g></g>
</g>
<rect x="417.7" y="362.4" width="546.7" height="270" fill="#fff" stroke="#000" stroke-width="1"/>
<g clip-path="url(#cchart)">
<rect x="436" y="621.10" width="524.2" height="1.6" fill="#cfcfcf"/>
<rect x="436" y="604.50" width="524.2" height="1.6" fill="#cfcfcf"/>
<rect x="436" y="587.90" width="524.2" height="1.6" fill="#cfcfcf"/>
<rect x="436" y="571.30" width="524.2" height="1.6" fill="#cfcfcf"/>
<rect x="436" y="538.10" width="524.2" height="1.6" fill="#cfcfcf"/>
<rect x="436" y="521.50" width="524.2" height="1.6" fill="#cfcfcf"/>
<rect x="436" y="504.90" width="524.2" height="1.6" fill="#cfcfcf"/>
<rect x="436" y="488.30" width="524.2" height="1.6" fill="#cfcfcf"/>
<rect x="436" y="471.70" width="524.2" height="1.6" fill="#cfcfcf"/>
<rect x="436" y="455.10" width="524.2" height="1.6" fill="#cfcfcf"/>
<rect x="436" y="438.50" width="524.2" height="1.6" fill="#cfcfcf"/>
<rect x="436" y="421.90" width="524.2" height="1.6" fill="#cfcfcf"/>
<rect x="436" y="405.30" width="524.2" height="1.6" fill="#cfcfcf"/>
<rect x="436" y="388.70" width="524.2" height="1.6" fill="#cfcfcf"/>
<rect x="436" y="372.10" width="524.2" height="1.6" fill="#cfcfcf"/>
<rect x="697" y="530" width="1" height="50" fill="#c4c4c4"/>
<rect x="435.50" y="548.6" width="1" height="13" fill="#d4d4d4"/>
<text x="0" y="0" font-size="6.17" font-family='"Liberation Mono", monospace' font-weight="normal" fill="#2a2a2a" text-anchor="start" xml:space="preserve" transform="translate(427.90 569) scale(1 1.2)">353</text>
<rect x="454.18" y="548.6" width="1" height="13" fill="#d4d4d4"/>
<text x="0" y="0" font-size="6.17" font-family='"Liberation Mono", monospace' font-weight="normal" fill="#2a2a2a" text-anchor="start" xml:space="preserve" transform="translate(446.58 569) scale(1 1.2)">327</text>
<rect x="472.86" y="548.6" width="1" height="13" fill="#d4d4d4"/>
<text x="0" y="0" font-size="6.17" font-family='"Liberation Mono", monospace' font-weight="normal" fill="#2a2a2a" text-anchor="start" xml:space="preserve" transform="translate(465.26 569) scale(1 1.2)">302</text>
<rect x="491.54" y="548.6" width="1" height="13" fill="#d4d4d4"/>
<text x="0" y="0" font-size="6.17" font-family='"Liberation Mono", monospace' font-weight="normal" fill="#2a2a2a" text-anchor="start" xml:space="preserve" transform="translate(483.94 569) scale(1 1.2)">277</text>
<rect x="510.21" y="548.6" width="1" height="13" fill="#d4d4d4"/>
<text x="0" y="0" font-size="6.17" font-family='"Liberation Mono", monospace' font-weight="normal" fill="#2a2a2a" text-anchor="start" xml:space="preserve" transform="translate(502.61 569) scale(1 1.2)">252</text>
<rect x="528.89" y="548.6" width="1" height="13" fill="#d4d4d4"/>
<text x="0" y="0" font-size="6.17" font-family='"Liberation Mono", monospace' font-weight="normal" fill="#2a2a2a" text-anchor="start" xml:space="preserve" transform="translate(521.29 569) scale(1 1.2)">227</text>
<rect x="547.57" y="548.6" width="1" height="13" fill="#d4d4d4"/>
<text x="0" y="0" font-size="6.17" font-family='"Liberation Mono", monospace' font-weight="normal" fill="#2a2a2a" text-anchor="start" xml:space="preserve" transform="translate(539.97 569) scale(1 1.2)">201</text>
<rect x="566.25" y="548.6" width="1" height="13" fill="#d4d4d4"/>
<text x="0" y="0" font-size="6.17" font-family='"Liberation Mono", monospace' font-weight="normal" fill="#2a2a2a" text-anchor="start" xml:space="preserve" transform="translate(558.65 569) scale(1 1.2)">176</text>
<rect x="584.93" y="548.6" width="1" height="13" fill="#d4d4d4"/>
<text x="0" y="0" font-size="6.17" font-family='"Liberation Mono", monospace' font-weight="normal" fill="#2a2a2a" text-anchor="start" xml:space="preserve" transform="translate(577.33 569) scale(1 1.2)">151</text>
<rect x="603.61" y="548.6" width="1" height="13" fill="#d4d4d4"/>
<text x="0" y="0" font-size="6.17" font-family='"Liberation Mono", monospace' font-weight="normal" fill="#2a2a2a" text-anchor="start" xml:space="preserve" transform="translate(596.01 569) scale(1 1.2)">126</text>
<rect x="622.29" y="548.6" width="1" height="13" fill="#d4d4d4"/>
<text x="0" y="0" font-size="6.17" font-family='"Liberation Mono", monospace' font-weight="normal" fill="#2a2a2a" text-anchor="start" xml:space="preserve" transform="translate(614.69 569) scale(1 1.2)">100</text>
<rect x="640.96" y="548.6" width="1" height="13" fill="#d4d4d4"/>
<text x="0" y="0" font-size="6.17" font-family='"Liberation Mono", monospace' font-weight="normal" fill="#2a2a2a" text-anchor="start" xml:space="preserve" transform="translate(633.36 569) scale(1 1.2)">75</text>
<rect x="659.64" y="548.6" width="1" height="13" fill="#d4d4d4"/>
<text x="0" y="0" font-size="6.17" font-family='"Liberation Mono", monospace' font-weight="normal" fill="#2a2a2a" text-anchor="start" xml:space="preserve" transform="translate(652.04 569) scale(1 1.2)">50</text>
<rect x="678.32" y="548.6" width="1" height="13" fill="#d4d4d4"/>
<text x="0" y="0" font-size="6.17" font-family='"Liberation Mono", monospace' font-weight="normal" fill="#2a2a2a" text-anchor="start" xml:space="preserve" transform="translate(670.72 569) scale(1 1.2)">25</text>
<text x="0" y="0" font-size="6.17" font-family='"Liberation Mono", monospace' font-weight="normal" fill="#2a2a2a" text-anchor="start" xml:space="preserve" transform="translate(689.40 569) scale(1 1.2)">0</text>
<rect x="715.68" y="548.6" width="1" height="13" fill="#d4d4d4"/>
<text x="0" y="0" font-size="6.17" font-family='"Liberation Mono", monospace' font-weight="normal" fill="#2a2a2a" text-anchor="start" xml:space="preserve" transform="translate(708.08 569) scale(1 1.2)">25</text>
<rect x="734.36" y="548.6" width="1" height="13" fill="#d4d4d4"/>
<text x="0" y="0" font-size="6.17" font-family='"Liberation Mono", monospace' font-weight="normal" fill="#2a2a2a" text-anchor="start" xml:space="preserve" transform="translate(726.76 569) scale(1 1.2)">50</text>
<rect x="753.04" y="548.6" width="1" height="13" fill="#d4d4d4"/>
<text x="0" y="0" font-size="6.17" font-family='"Liberation Mono", monospace' font-weight="normal" fill="#2a2a2a" text-anchor="start" xml:space="preserve" transform="translate(745.44 569) scale(1 1.2)">75</text>
<rect x="771.71" y="548.6" width="1" height="13" fill="#d4d4d4"/>
<text x="0" y="0" font-size="6.17" font-family='"Liberation Mono", monospace' font-weight="normal" fill="#2a2a2a" text-anchor="start" xml:space="preserve" transform="translate(764.11 569) scale(1 1.2)">100</text>
<rect x="790.39" y="548.6" width="1" height="13" fill="#d4d4d4"/>
<text x="0" y="0" font-size="6.17" font-family='"Liberation Mono", monospace' font-weight="normal" fill="#2a2a2a" text-anchor="start" xml:space="preserve" transform="translate(782.79 569) scale(1 1.2)">126</text>
<rect x="809.07" y="548.6" width="1" height="13" fill="#d4d4d4"/>
<text x="0" y="0" font-size="6.17" font-family='"Liberation Mono", monospace' font-weight="normal" fill="#2a2a2a" text-anchor="start" xml:space="preserve" transform="translate(801.47 569) scale(1 1.2)">151</text>
<rect x="827.75" y="548.6" width="1" height="13" fill="#d4d4d4"/>
<text x="0" y="0" font-size="6.17" font-family='"Liberation Mono", monospace' font-weight="normal" fill="#2a2a2a" text-anchor="start" xml:space="preserve" transform="translate(820.15 569) scale(1 1.2)">176</text>
<rect x="846.43" y="548.6" width="1" height="13" fill="#d4d4d4"/>
<text x="0" y="0" font-size="6.17" font-family='"Liberation Mono", monospace' font-weight="normal" fill="#2a2a2a" text-anchor="start" xml:space="preserve" transform="translate(838.83 569) scale(1 1.2)">201</text>
<rect x="865.11" y="548.6" width="1" height="13" fill="#d4d4d4"/>
<text x="0" y="0" font-size="6.17" font-family='"Liberation Mono", monospace' font-weight="normal" fill="#2a2a2a" text-anchor="start" xml:space="preserve" transform="translate(857.51 569) scale(1 1.2)">227</text>
<rect x="883.79" y="548.6" width="1" height="13" fill="#d4d4d4"/>
<text x="0" y="0" font-size="6.17" font-family='"Liberation Mono", monospace' font-weight="normal" fill="#2a2a2a" text-anchor="start" xml:space="preserve" transform="translate(876.19 569) scale(1 1.2)">252</text>
<rect x="902.46" y="548.6" width="1" height="13" fill="#d4d4d4"/>
<text x="0" y="0" font-size="6.17" font-family='"Liberation Mono", monospace' font-weight="normal" fill="#2a2a2a" text-anchor="start" xml:space="preserve" transform="translate(894.86 569) scale(1 1.2)">277</text>
<rect x="921.14" y="548.6" width="1" height="13" fill="#d4d4d4"/>
<text x="0" y="0" font-size="6.17" font-family='"Liberation Mono", monospace' font-weight="normal" fill="#2a2a2a" text-anchor="start" xml:space="preserve" transform="translate(913.54 569) scale(1 1.2)">302</text>
<rect x="939.82" y="548.6" width="1" height="13" fill="#d4d4d4"/>
<text x="0" y="0" font-size="6.17" font-family='"Liberation Mono", monospace' font-weight="normal" fill="#2a2a2a" text-anchor="start" xml:space="preserve" transform="translate(932.22 569) scale(1 1.2)">327</text>
<rect x="958.50" y="548.6" width="1" height="13" fill="#d4d4d4"/>
<text x="0" y="0" font-size="6.17" font-family='"Liberation Mono", monospace' font-weight="normal" fill="#2a2a2a" text-anchor="start" xml:space="preserve" transform="translate(950.90 569) scale(1 1.2)">353</text>
<text x="0" y="0" font-size="6.17" font-family='"Liberation Mono", monospace' font-weight="normal" fill="#2a2a2a" text-anchor="start" xml:space="preserve" transform="translate(417.6 569) scale(1 1.2)">3</text>
<rect x="684.5" y="385.50" width="31.0" height="8" fill="#fff"/>
<text x="0" y="0" font-size="9.7" font-family='"Liberation Mono", monospace' font-weight="normal" fill="#000" text-anchor="start" xml:space="preserve" transform="translate(685.7 393.20) scale(1 1.16)" stroke="#000" stroke-width="0.2">0.125</text>
<rect x="684.5" y="418.70" width="19.4" height="8" fill="#fff"/>
<text x="0" y="0" font-size="9.7" font-family='"Liberation Mono", monospace' font-weight="normal" fill="#000" text-anchor="start" xml:space="preserve" transform="translate(685.7 426.40) scale(1 1.16)" stroke="#000" stroke-width="0.2">0.1</text>
<rect x="684.5" y="451.90" width="31.0" height="8" fill="#fff"/>
<text x="0" y="0" font-size="9.7" font-family='"Liberation Mono", monospace' font-weight="normal" fill="#000" text-anchor="start" xml:space="preserve" transform="translate(685.7 459.60) scale(1 1.16)" stroke="#000" stroke-width="0.2">0.075</text>
<rect x="684.5" y="485.10" width="25.2" height="8" fill="#fff"/>
<text x="0" y="0" font-size="9.7" font-family='"Liberation Mono", monospace' font-weight="normal" fill="#000" text-anchor="start" xml:space="preserve" transform="translate(685.7 492.80) scale(1 1.16)" stroke="#000" stroke-width="0.2">0.05</text>
<rect x="684.5" y="518.30" width="31.0" height="8" fill="#fff"/>
<text x="0" y="0" font-size="9.7" font-family='"Liberation Mono", monospace' font-weight="normal" fill="#000" text-anchor="start" xml:space="preserve" transform="translate(685.7 526.00) scale(1 1.16)" stroke="#000" stroke-width="0.2">0.025</text>
<rect x="684.5" y="584.70" width="36.8" height="8" fill="#fff"/>
<text x="0" y="0" font-size="9.7" font-family='"Liberation Mono", monospace' font-weight="normal" fill="#000" text-anchor="start" xml:space="preserve" transform="translate(685.7 592.40) scale(1 1.16)" stroke="#000" stroke-width="0.2">-0.025</text>
<rect x="684.5" y="617.90" width="31.0" height="8" fill="#fff"/>
<text x="0" y="0" font-size="9.7" font-family='"Liberation Mono", monospace' font-weight="normal" fill="#000" text-anchor="start" xml:space="preserve" transform="translate(685.7 625.60) scale(1 1.16)" stroke="#000" stroke-width="0.2">-0.05</text>
<text x="0" y="0" font-size="9.7" font-family='"Liberation Mono", monospace' font-weight="normal" fill="#000" text-anchor="start" xml:space="preserve" transform="translate(686.2 559.40) scale(1 1.16)" stroke="#000" stroke-width="0.2">0</text>
<rect x="435.8" y="554.5" width="524.4" height="1.6" fill="#000"/>
<path d="M436.1 527.2 C437.8 529.4 443.1 536.7 446.3 540.1 C449.6 543.5 452.8 546.1 455.6 547.8 C458.4 549.4 460.2 549.8 463.3 550 C466.4 550.2 469.6 550.0 474 548.8 C478.4 547.6 484.9 544.8 489.5 542.6 C494.1 540.4 498.0 537.2 501.9 535.5 C505.8 533.8 509.1 532.6 512.7 532.4 C516.3 532.1 519.6 532.8 523.5 534 C527.4 535.2 531.7 538.0 535.8 539.5 C539.9 541.0 543.0 542.4 548.1 543.2 C553.2 544.0 561.6 543.1 566.7 544.1 C571.9 545.1 574.9 547.9 579 549.4 C583.1 550.9 587.3 552.6 591.4 553.1 C595.5 553.6 599.1 553.4 603.7 552.5 C608.3 551.6 614.0 549.8 619.1 547.8 C624.2 545.8 629.7 542.4 634.6 540.7 C639.5 539.0 644.4 537.9 648.5 537.7 C652.6 537.5 655.4 538.1 659.3 539.5 C663.1 540.9 667.5 543.6 671.6 546.3 C675.7 549.0 680.4 553.5 684 555.5 C687.6 557.5 690.1 558.1 693.2 558.6 C696.4 559.1 699.2 559.1 702.9 558.8 C706.6 558.4 711.1 557.4 715.2 556.5 C719.3 555.6 724.0 553.9 727.6 553.4 C731.2 552.9 733.2 552.8 736.8 553.4 C740.4 554.0 744.6 555.4 749.2 557.1 C753.8 558.9 759.5 562.0 764.6 563.9 C769.7 565.8 774.9 567.0 780 568.5 C785.1 570.0 790.6 571.8 795.5 572.8 C800.4 573.8 804.7 574.8 809.3 574.7 C813.9 574.7 818.8 573.9 823.2 572.5 C827.6 571.1 831.7 567.9 835.6 566.4 C839.5 564.9 842.8 563.7 846.4 563.3 C850.0 562.9 852.8 564.2 857.2 564.2 C861.6 564.2 867.5 564.1 872.6 563.3 C877.7 562.5 883.4 561.0 888 559.3 C892.6 557.6 895.8 556.0 900.4 553.1 C905.0 550.2 910.6 545.7 915.8 541.7 C920.9 537.7 926.9 532.5 931.3 529.3 C935.7 526.0 939.3 523.6 942.1 522.2 C944.9 520.8 946.2 520.7 948.2 520.7 C950.2 520.7 952.6 521.4 954.4 522.2 C956.2 523.0 958.2 524.8 959 525.3" fill="none" stroke="#000" stroke-width="1.3" stroke-linejoin="round"/>
<text x="421" y="379.4" font-size="10.15" font-family='"Liberation Mono", monospace' font-weight="bold" fill="#000" text-anchor="start" xml:space="preserve" textLength="200.9" lengthAdjust="spacingAndGlyphs" >Wavefront Error in waves at 550nm</text>
<text x="422.6" y="388.3" font-size="6.3" font-family='"Liberation Mono", monospace' font-weight="normal" fill="#333" text-anchor="start" xml:space="preserve" textLength="170" lengthAdjust="spacingAndGlyphs" >SURFACE AVERAGE_Sp2_5Pos_alle72&quot;_27092011.wft</text>
<ellipse cx="869.7" cy="506" rx="14.4" ry="19.4" fill="none" stroke="#333" stroke-width="0.9"/>
<path d="M856 506 H884 M880.5 503 L884 506 L880.5 509" fill="none" stroke="#111" stroke-width="0.9"/>
<circle cx="855.5" cy="506" r="2.8" fill="#19d3d3" stroke="#1a9a9a" stroke-width="0.7"/>
<text x="846.8" y="484.2" font-size="6.6" font-family='"Liberation Mono", monospace' font-weight="normal" fill="#222" text-anchor="start" xml:space="preserve" >Angle</text>
<text x="850.8" y="531.2" font-size="6.4" font-family='"Liberation Mono", monospace' font-weight="normal" fill="#222" text-anchor="start" xml:space="preserve" >180.0</text>
</g>
</svg></body></html>
